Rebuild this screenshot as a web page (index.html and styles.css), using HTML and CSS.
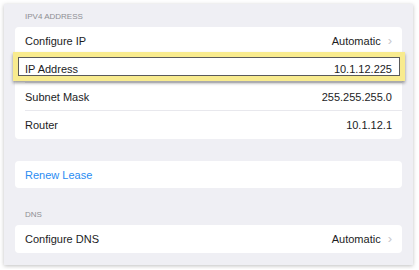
FILE: index.html
```html
<!DOCTYPE html>
<html lang="en">

<head>
    <meta charset="UTF-8">
    <meta name="viewport" content="width=device-width, initial-scale=1.0">
    <title>Network Settings</title>
    <link rel="stylesheet" href="styles.css">
</head>

<body>
    <div class="panel">
        <div class="section-title">IPV4 ADDRESS</div>
        <div class="card">
            <div class="row">
                <span class="label">Configure IP</span>
                <span class="value">Automatic <span class="chevron">&#x203A;</span></span>
            </div>
            <div class="row highlighted">
                <span class="label">IP Address</span>
                <span class="value">10.1.12.225</span>
                <div class="highlight"></div>
            </div>
            <div class="row">
                <span class="label">Subnet Mask</span>
                <span class="value">255.255.255.0</span>
            </div>
            <div class="row">
                <span class="label">Router</span>
                <span class="value">10.1.12.1</span>
            </div>
        </div>

        <div class="card renew">
            <div class="row">
                <span class="label link">Renew Lease</span>
            </div>
        </div>

        <div class="section-title">DNS</div>
        <div class="card">
            <div class="row">
                <span class="label">Configure DNS</span>
                <span class="value">Automatic <span class="chevron">&#x203A;</span></span>
            </div>
        </div>
    </div>
</body>

</html>
```

FILE: styles.css
```css
body {
    font-family: "Liberation Sans", Arial, sans-serif;
    margin: 0;
    background-color: #ffffff;
}

.panel {
    margin: 4px;
    width: 387px;
    height: 247px;
    padding: 8px 11px 6px 11px;
    background-color: #efeff4;
    box-shadow: 0px 1px 4px rgba(0, 0, 0, 0.25);
}

.section-title {
    font-size: 8px;
    color: #8e8e93;
    padding: 1px 0 6px 10px;
    height: 8px;
    line-height: 8px;
}

.card {
    background-color: white;
    border-radius: 4px;
    margin-bottom: 22px;
}

.row {
    position: relative;
    display: flex;
    justify-content: space-between;
    align-items: center;
    height: 28px;
    margin-left: 10px;
    padding-right: 10px;
    font-size: 11px;
    color: #1c1c1e;
    border-bottom: 1px solid #e8e8ed;
    box-sizing: border-box;
}

.row:last-child {
    border-bottom: none;
}

.value {
    display: flex;
    align-items: center;
}

.chevron {
    color: #c7c7cc;
    font-size: 13px;
    margin-left: 7px;
    line-height: 10px;
}

.link {
    color: #2a8cf2;
}

.renew .row {
    height: 27px;
}

.highlight {
    position: absolute;
    left: -12px;
    right: -3px;
    top: -3px;
    bottom: 1px;
    border: 5px solid #f8eb8e;
    box-shadow: inset 0 0 0 1px #5a5a5a, 0px 2px 3px rgba(0, 0, 0, 0.4);
    pointer-events: none;
}
```
